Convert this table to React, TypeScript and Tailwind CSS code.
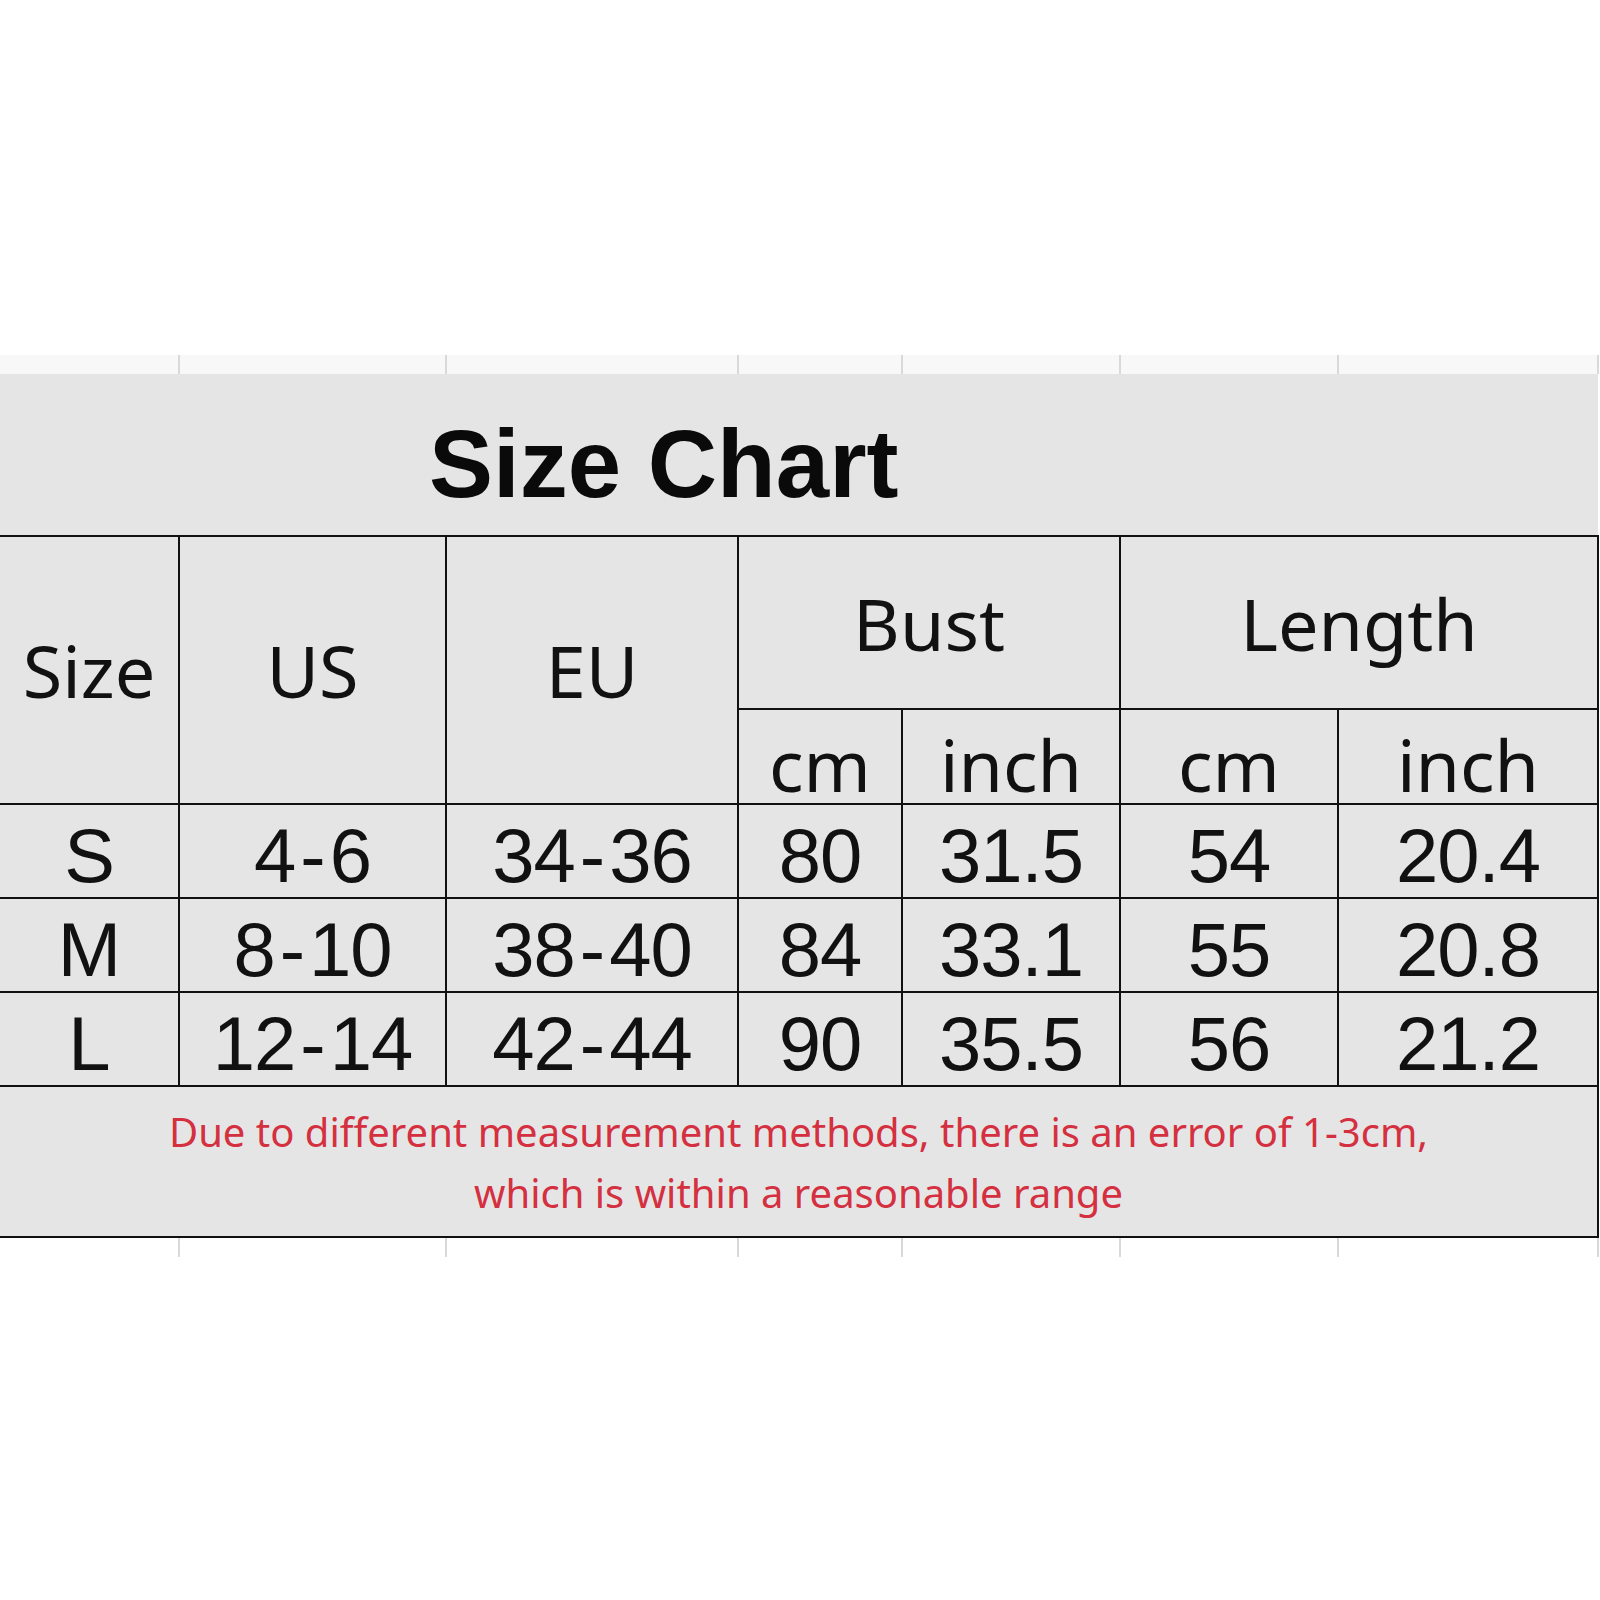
import React from "react";

const hdr = "bg-[#e6e5e6] flex items-center justify-center text-[72px] leading-none text-[#111] [font-family:'Noto_Sans',sans-serif]";
const cell = "bg-[#e6e5e6] flex items-center justify-center text-[76px] leading-none text-[#111] tracking-[-1px] [font-family:'Liberation_Sans',Arial,sans-serif] pt-[10px]";

function Val({ v }: { v: string }) {
  const parts = v.split("-");
  if (parts.length === 1) return <span>{v}</span>;
  return (
    <span>
      {parts[0]}
      <span className="mx-[5px]">-</span>
      {parts[1]}
    </span>
  );
}

const rows = [
  ["S", "4-6", "34-36", "80", "31.5", "54", "20.4"],
  ["M", "8-10", "38-40", "84", "33.1", "55", "20.8"],
  ["L", "12-14", "42-44", "90", "35.5", "56", "21.2"],
];

function Ticks({ tint }: { tint: string }) {
  return (
    <div className="grid grid-cols-[178px_265px_290px_162px_216px_216px_258px] gap-x-[2px] pr-[1px] bg-[#d9d9d9] w-[1599px] h-[19px]">
      {Array.from({ length: 7 }).map((_, i) => (
        <div key={i} className={tint} />
      ))}
    </div>
  );
}

export default function App() {
  return (
    <div className="w-[1600px] h-[1600px] bg-white flex flex-col">
      <div className="h-[355px]" />
      <Ticks tint="bg-[#f8f8f8]" />
      <div className="w-[1598px] bg-[#e6e5e6]">
        <div className="h-[161px] flex items-center pl-[429px] pt-[18px]">
          <span className="text-[96px] leading-none font-bold text-[#0a0a0a] [font-family:'Liberation_Sans',Arial,sans-serif]">
            Size Chart
          </span>
        </div>
      </div>
      <div className="w-[1599px] bg-[#111] pt-[2px] pr-[2px] pb-[2px] grid grid-cols-[178px_265px_290px_162px_216px_216px_258px] grid-rows-[171px_93px_92px_92px_92px_149px] gap-[2px]">
        <div className={`${hdr} row-span-2`}>Size</div>
        <div className={`${hdr} row-span-2`}>US</div>
        <div className={`${hdr} row-span-2`}>EU</div>
        <div className={`${hdr} col-span-2`}>Bust</div>
        <div className={`${hdr} col-span-2`}>Length</div>
        <div className={`${hdr} pt-[14px]`}>cm</div>
        <div className={`${hdr} pt-[14px]`}>inch</div>
        <div className={`${hdr} pt-[14px]`}>cm</div>
        <div className={`${hdr} pt-[14px]`}>inch</div>
        {rows.map((r) =>
          r.map((v, i) => (
            <div key={r[0] + i} className={cell}>
              <Val v={v} />
            </div>
          ))
        )}
        <div className="col-span-7 bg-[#e6e5e6] flex flex-col items-center justify-center text-[40px] leading-[61px] text-[#d4303f] [font-family:'Noto_Sans',sans-serif]">
          <span>Due to different measurement methods, there is an error of 1-3cm,</span>
          <span>which is within a reasonable range</span>
        </div>
      </div>
      <Ticks tint="bg-white" />
    </div>
  );
}
